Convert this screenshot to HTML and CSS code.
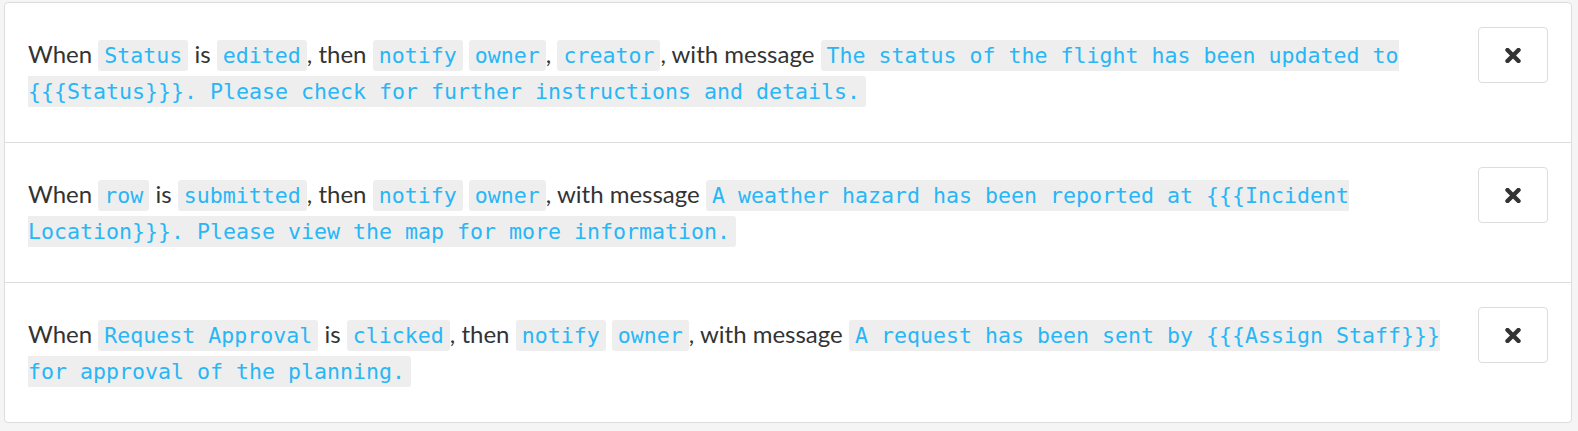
FILE: index.html
```html
<!DOCTYPE html>
<html lang="en">
<head>
  <meta charset="UTF-8">
  <meta name="viewport" content="width=device-width, initial-scale=1.0">
  <title>Notification Rules</title>
  <link rel="stylesheet" href="styles.css">
</head>
<body>

  <div class="rule-list">
    <div class="rule">
      <div class="rule-text">
        When <code>Status</code> is <code>edited</code>, then <code>notify</code> <code>owner</code>, <code>creator</code>, with message <code>The status of the flight has been updated to {{{Status}}}. Please check for further instructions and details.</code>
      </div>
      <button class="remove-btn" title="Remove">
        <svg viewBox="0 0 16 15" width="16" height="15"><path d="M2.5 2 L13.5 13 M13.5 2 L2.5 13" /></svg>
      </button>
    </div>

    <div class="rule">
      <div class="rule-text">
        When <code>row</code> is <code>submitted</code>, then <code>notify</code> <code>owner</code>, with message <code>A weather hazard has been reported at {{{Incident Location}}}. Please view the map for more information.</code>
      </div>
      <button class="remove-btn" title="Remove">
        <svg viewBox="0 0 16 15" width="16" height="15"><path d="M2.5 2 L13.5 13 M13.5 2 L2.5 13" /></svg>
      </button>
    </div>

    <div class="rule">
      <div class="rule-text">
        When <code>Request Approval</code> is <code>clicked</code>, then <code>notify</code> <code>owner</code>, with message <code>A request has been sent by {{{Assign Staff}}} for approval of the planning.</code>
      </div>
      <button class="remove-btn" title="Remove">
        <svg viewBox="0 0 16 15" width="16" height="15"><path d="M2.5 2 L13.5 13 M13.5 2 L2.5 13" /></svg>
      </button>
    </div>
  </div>

</body>
</html>
```

FILE: styles.css
```css
body {
  font-family: Lato, sans-serif;
  margin: 0;
  padding: 2px 6px 10px 4px;
  background-color: #f5f5f5;
  color: #333;
}

.rule-list {
  background: #fff;
  border: 1px solid #ddd;
  border-radius: 4px;
}

.rule {
  display: flex;
  justify-content: space-between;
  align-items: flex-start;
  gap: 20px;
  padding: 24px 23px;
  border-bottom: 1px solid #ddd;
}

.rule:last-child {
  border-bottom: none;
}

.rule-text {
  font-size: 24px;
  line-height: 36px;
  padding: 9px 0 10px;
}

.rule-text code {
  font-family: "DejaVu Sans Mono", monospace;
  font-size: 21.6px;
  line-height: 24px;
  color: #29b6f6;
  background: #eee;
  border-radius: 3px;
  padding: 3px 6px;
}

.remove-btn {
  flex-shrink: 0;
  width: 70px;
  height: 56px;
  background: #fff;
  border: 1px solid #ddd;
  border-radius: 4px;
  display: flex;
  align-items: center;
  justify-content: center;
  cursor: pointer;
}

.remove-btn svg path {
  stroke: #333;
  stroke-width: 4.4;
  stroke-linecap: round;
  fill: none;
}
```
